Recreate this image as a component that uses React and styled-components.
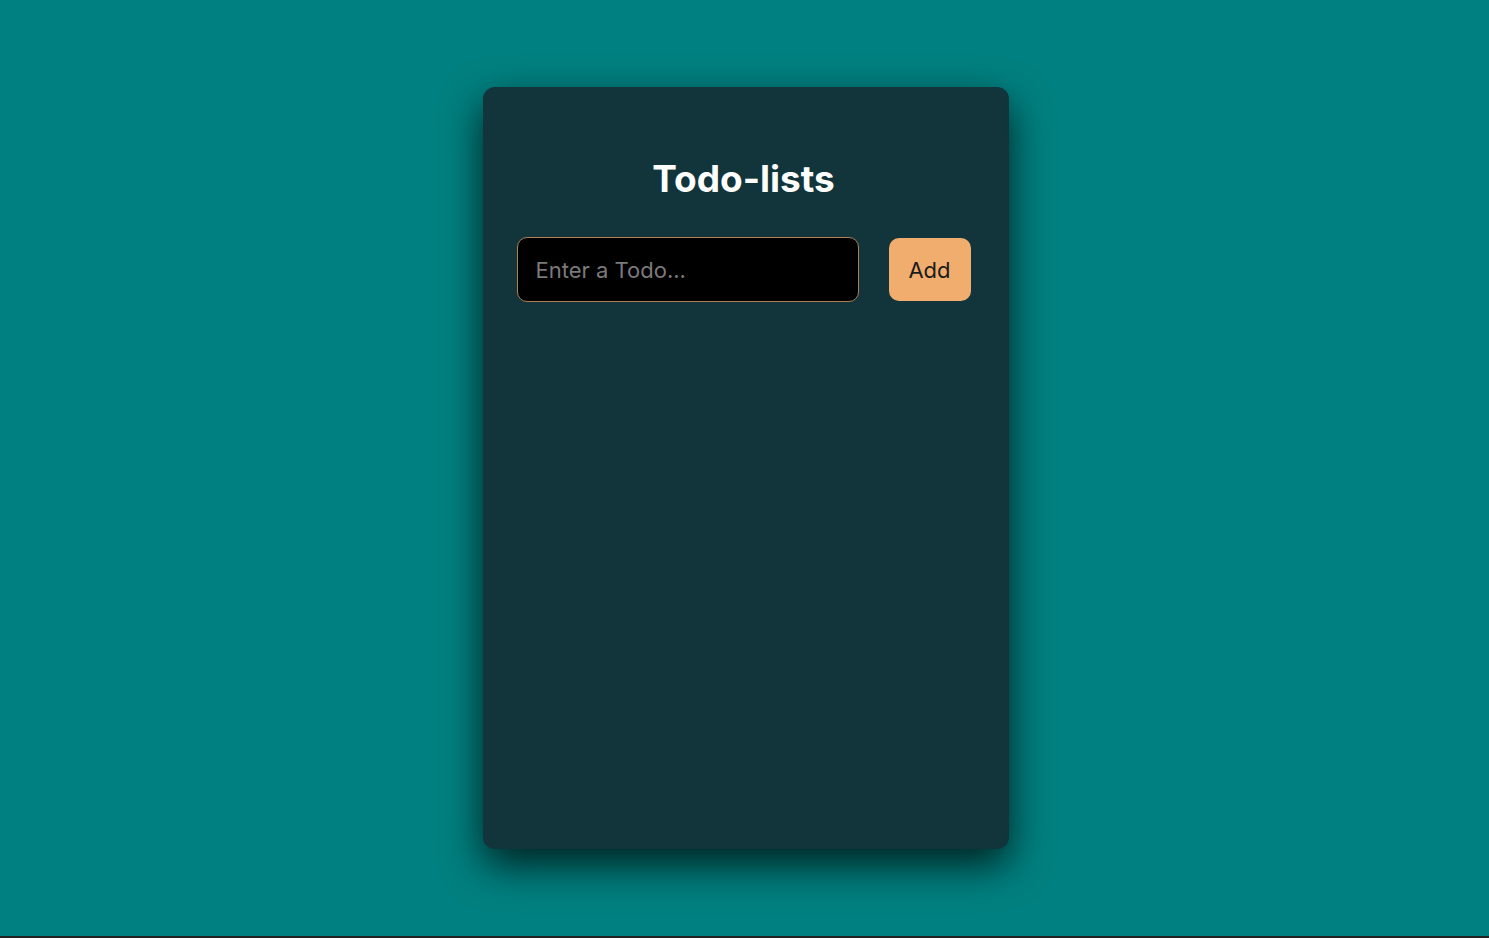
import styled, { createGlobalStyle } from 'styled-components';

const GlobalStyle = createGlobalStyle`
    html, body {
        margin: 0;
        padding: 0;
        background-color: #222;
    }
    body {
        font-family: Inter, Roboto, "Liberation Sans", sans-serif;
    }
`;

function App() {
    return (
        <>
            <GlobalStyle />
            <Page>
                <Card>
                    <Title>Todo-lists</Title>
                    <Form onSubmit={(e) => e.preventDefault()}>
                        <Input type="text" placeholder="Enter a Todo..." />
                        <AddButton type="submit">Add</AddButton>
                    </Form>
                </Card>
            </Page>
        </>
    );
}

const Page = styled.div`
    height: 936px;
    background-color: #008080;
    display: flex;
    justify-content: center;
    align-items: flex-start;
    padding: 87px 0 0 2px;
    box-sizing: border-box;
`;

const Card = styled.div`
    width: 526px;
    height: 762px;
    box-sizing: border-box;
    background-color: #12343b;
    border-radius: 12px;
    box-shadow: 0 16px 40px rgba(0, 0, 0, 0.75);
    padding: 71px 38px 0 34px;
    display: flex;
    flex-direction: column;
`;

const Title = styled.h1`
    margin: 0 0 38px;
    text-align: center;
    color: #fff;
    font-size: 37px;
    font-weight: 700;
    line-height: 41px;
`;

const Form = styled.form`
    display: flex;
    align-items: center;
    gap: 30px;
`;

const Input = styled.input`
    width: 342px;
    height: 65px;
    box-sizing: border-box;
    background-color: #000;
    border: 1px solid #b07f50;
    border-radius: 10px;
    padding: 0 18px;
    color: #fff;
    font-family: Inter, Roboto, "Liberation Sans", sans-serif;
    font-size: 22px;
    outline: none;

    &::placeholder {
        color: #7b7b7b;
    }
`;

const AddButton = styled.button`
    width: 82px;
    height: 63px;
    background-color: #f0ad6e;
    border: none;
    border-radius: 10px;
    color: #1b1b1b;
    font-family: Inter, Roboto, "Liberation Sans", sans-serif;
    font-size: 22px;
    cursor: pointer;
`;

export default App;
